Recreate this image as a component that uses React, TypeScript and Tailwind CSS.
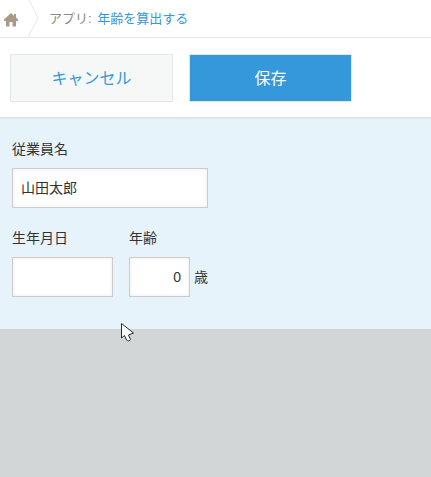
const font = "font-['Liberation_Sans','Noto_Sans_CJK_JP',sans-serif]";

function Field({ label, value, width, align }: { label: string; value: string; width: string; align?: string }) {
  return (
    <div className={`${width} shrink-0`}>
      <div className="text-[14px] leading-[20px] text-[#333333] h-[20px] whitespace-nowrap">{label}</div>
      <div
        className={`mt-[9px] h-[40px] border border-[#cccccc] bg-white shadow-[inset_0_0_4px_rgba(0,0,0,0.08)] flex items-center px-2 text-[14px] text-[#333333] ${align ?? ""}`}
      >
        {value}
      </div>
    </div>
  );
}

export default function App() {
  return (
    <div className={`w-[431px] h-[477px] overflow-hidden bg-[#d3d6d7] relative flex flex-col ${font}`}>
      <div className="h-[38px] shrink-0 bg-white border-b border-[#e3e7e8] flex items-center">
        <div className="w-[22px] flex pl-[4px] pt-[1px]">
          <svg width="14" height="15" viewBox="0 0 14 15" fill="#a89b85">
            <path d="M7 1 L0 7.5 V9 H2 V14.5 H5.5 V10 H8.5 V14.5 H12 V9 H14 V7.5 L12 5.6 V2 H10 V3.8 L8.5 2.4 Z" />
          </svg>
        </div>
        <svg width="12" height="37" viewBox="0 0 12 37" fill="none" stroke="#e3e7e8" className="ml-[6px] shrink-0">
          <path d="M1 0 L10 18 L0 37" />
        </svg>
        <div className="ml-[9px] text-[13px] text-[#888888] whitespace-nowrap">
          アプリ: <a className="ml-[2px] text-[#3498db]">年齢を算出する</a>
        </div>
      </div>

      <div className="h-[81px] shrink-0 bg-white border-b-2 border-[#e3e7e8] flex gap-4 pt-4 pl-[10px]">
        <button className="w-[163px] h-[48px] border border-[#e3e7e8] bg-[#f6f8f8] text-[#3498db] text-[16px] pt-[2px]">
          キャンセル
        </button>
        <button className="w-[163px] h-[48px] border border-[#e3e7e8] bg-[#3498db] text-white text-[16px] pt-[2px]">
          保存
        </button>
      </div>

      <div className="h-[210px] shrink-0 bg-[#e7f3fa] px-3 pt-5">
        <Field label="従業員名" value="山田太郎" width="w-[196px]" />
        <div className="flex gap-4 mt-5">
          <Field label="生年月日" value="" width="w-[101px]" />
          <div className="flex items-end">
            <Field label="年齢" value="0" width="w-[61px]" align="justify-end" />
            <span className="ml-1 h-[40px] leading-[40px] text-[14px] text-[#333333]">歳</span>
          </div>
        </div>
      </div>

      <svg width="15" height="20" viewBox="0 0 15 20" className="absolute left-[121px] top-[323px]">
        <path d="M0.5 0.5 V15 L3.5 12.5 L5.5 17 C7 18.5 9 18 9.5 16.5 L7.5 12 L12.5 10 Z" fill="#ffffff" stroke="#2a2a2a" strokeWidth="1" />
      </svg>
    </div>
  );
}
